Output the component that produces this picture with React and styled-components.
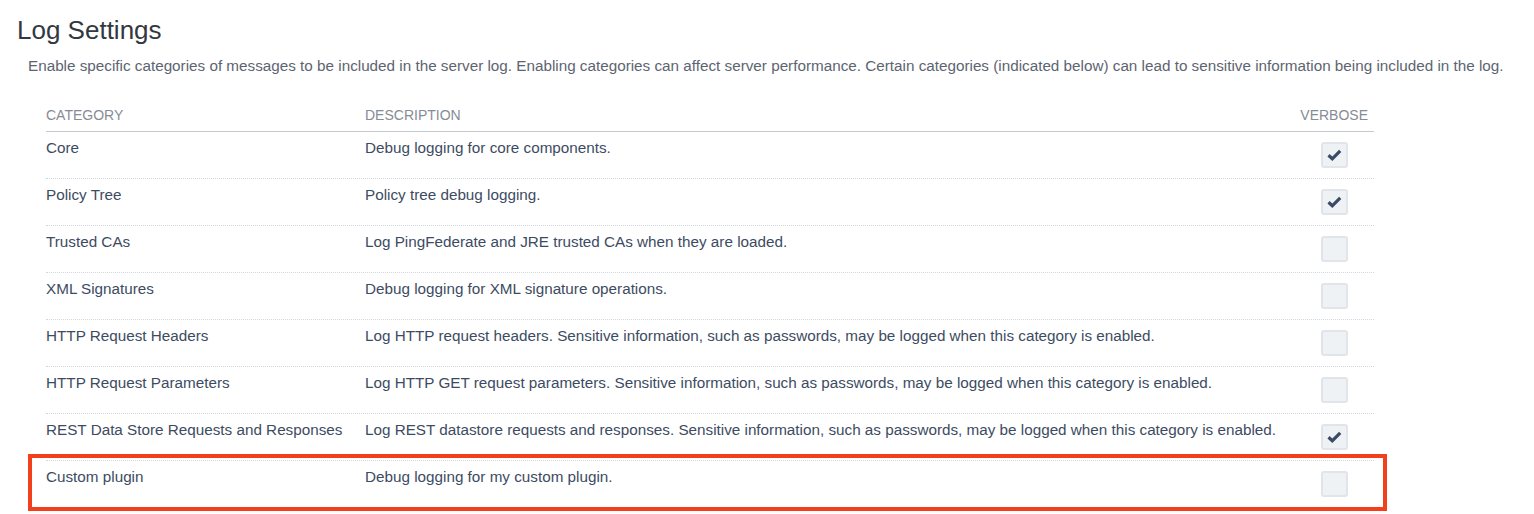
import React from 'react';
import styled, { createGlobalStyle } from 'styled-components';

const GlobalStyle = createGlobalStyle`
  body {
    margin: 0;
    background: #fff;
    font-family: "Liberation Sans", Arial, Helvetica, sans-serif;
  }
`;

const Page = styled.div`
  padding: 13px 0 8px 17px;
`;

const Title = styled.h1`
  margin: 0;
  font-size: 26px;
  line-height: 34px;
  font-weight: 400;
  color: #333840;
`;

const Intro = styled.p`
  margin: 10px 0 0 11px;
  font-size: 15.25px;
  line-height: 18px;
  color: #5d6471;
  white-space: nowrap;
`;

const Table = styled.div`
  margin: 32px 0 0 29px;
  width: 1328px;
`;

const Row = styled.div`
  position: relative;
  display: grid;
  grid-template-columns: 319px 1fr 80px;
  align-items: start;
  border-bottom: 1px ${({ $head }) => ($head ? 'solid #c6c9cd' : 'dotted #d3d6da')};
  ${({ $last }) => $last && 'border-bottom: none;'}

  ${({ $highlight }) =>
    $highlight &&
    `
    &::after {
      content: '';
      position: absolute;
      left: -18px;
      right: -13px;
      top: -7px;
      bottom: -4px;
      border: 4px solid #f2401c;
      pointer-events: none;
    }
  `}
`;

const HeadCell = styled.div`
  font-size: 14px;
  line-height: 16px;
  padding: 0 0 8px;
  color: #868c95;
  text-transform: uppercase;
  text-align: ${({ $right }) => ($right ? 'right' : 'left')};
  padding-right: ${({ $right }) => ($right ? '6px' : '0')};
`;

const Cell = styled.div`
  font-size: 15.25px;
  line-height: 18px;
  padding: 7px 0 0;
  color: #3d4b62;
  white-space: nowrap;
`;

const CheckCell = styled.div`
  display: flex;
  justify-content: flex-end;
  padding: 10px 26px 10px 0;
`;

const Box = styled.span`
  width: 27px;
  height: 26px;
  box-sizing: border-box;
  border: 2px solid #e1e5e9;
  border-radius: 3px;
  background: #eef2f5;
  display: flex;
  align-items: center;
  justify-content: center;
`;

const Check = () => (
  <svg width="15" height="12" viewBox="0 0 15 12">
    <path d="M1.5 6.3 L5.3 9.8 L13.2 1.8" fill="none" stroke="#3b4a66" strokeWidth="3.2" strokeLinejoin="miter" />
  </svg>
);

const rows = [
  ['Core', 'Debug logging for core components.', true],
  ['Policy Tree', 'Policy tree debug logging.', true],
  ['Trusted CAs', 'Log PingFederate and JRE trusted CAs when they are loaded.', false],
  ['XML Signatures', 'Debug logging for XML signature operations.', false],
  ['HTTP Request Headers', 'Log HTTP request headers. Sensitive information, such as passwords, may be logged when this category is enabled.', false],
  ['HTTP Request Parameters', 'Log HTTP GET request parameters. Sensitive information, such as passwords, may be logged when this category is enabled.', false],
  ['REST Data Store Requests and Responses', 'Log REST datastore requests and responses. Sensitive information, such as passwords, may be logged when this category is enabled.', true],
  ['Custom plugin', 'Debug logging for my custom plugin.', false],
];

export default function App() {
  return (
    <Page>
      <GlobalStyle />
      <Title>Log Settings</Title>
      <Intro>
        Enable specific categories of messages to be included in the server log. Enabling categories can affect server performance. Certain categories (indicated below) can lead to sensitive information being included in the log.
      </Intro>
      <Table>
        <Row $head>
          <HeadCell>Category</HeadCell>
          <HeadCell>Description</HeadCell>
          <HeadCell $right>Verbose</HeadCell>
        </Row>
        {rows.map(([name, desc, on], i) => (
          <Row key={name} $last={i === rows.length - 1} $highlight={name === 'Custom plugin'}>
            <Cell>{name}</Cell>
            <Cell>{desc}</Cell>
            <CheckCell>
              <Box>{on && <Check />}</Box>
            </CheckCell>
          </Row>
        ))}
      </Table>
    </Page>
  );
}
